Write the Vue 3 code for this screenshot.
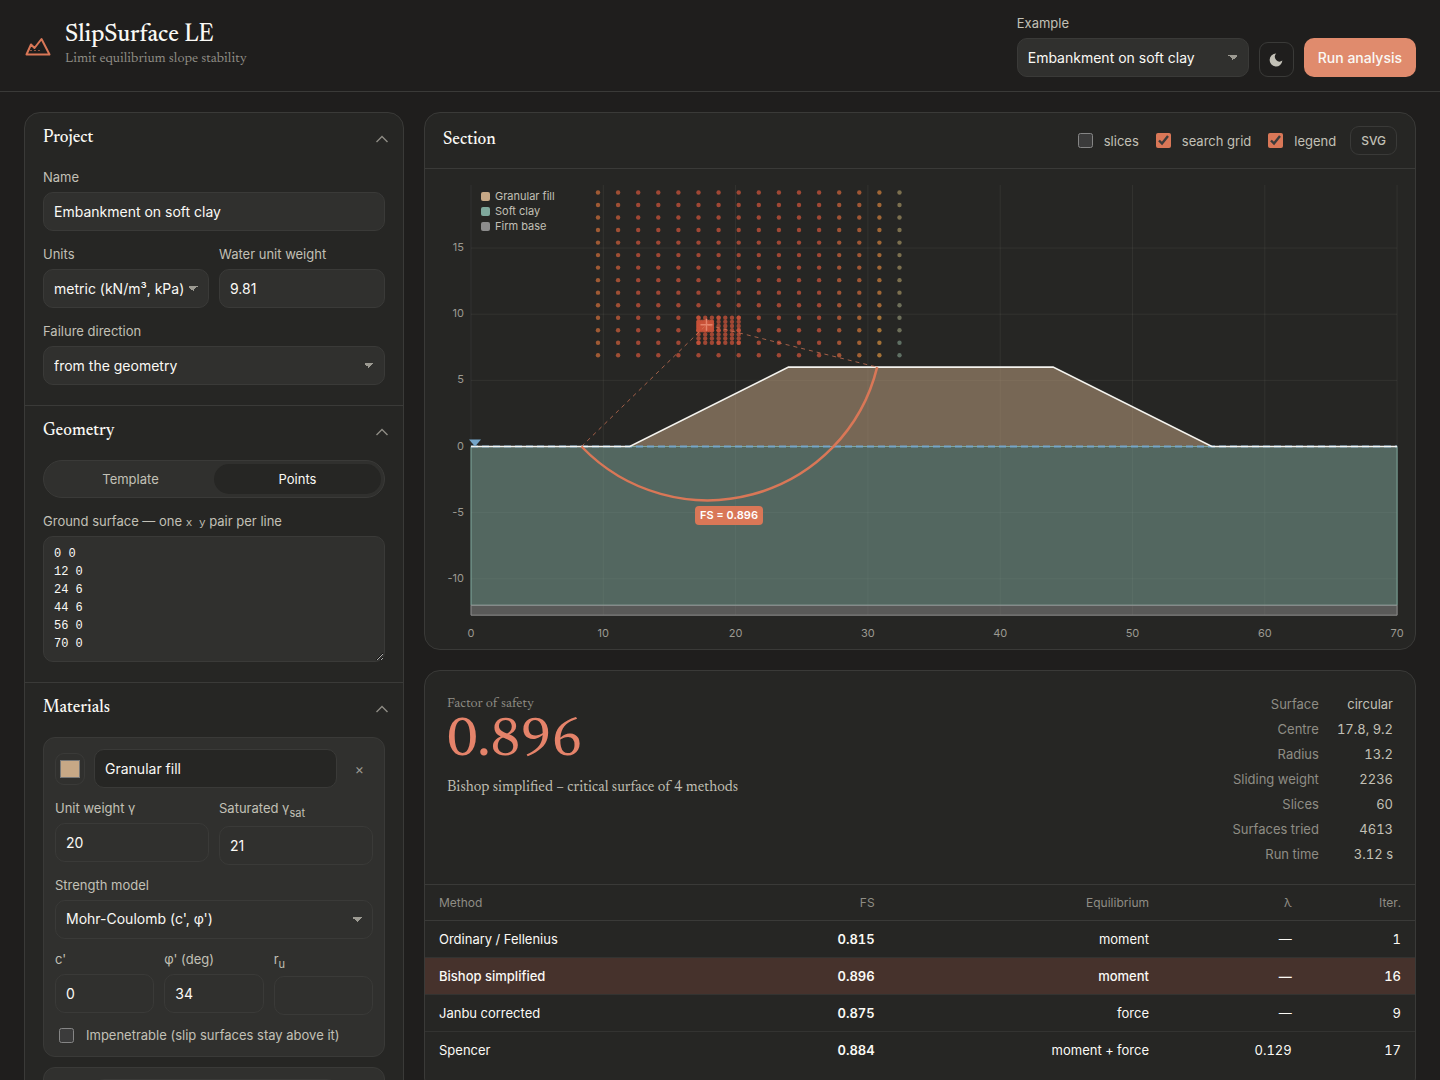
<script setup>
import { computed, ref } from 'vue';

const project = ref({ name: 'Embankment on soft clay', units: 'metric', water: '9.81', direction: 'auto' });
const example = ref('embankment');
const geometryTab = ref('points');
const surface = ref('0 0\n12 0\n24 6\n44 6\n56 0\n70 0');
const show = ref({ slices: false, grid: true, legend: true });
const materials = ref([
  { name: 'Granular fill', color: '#c7a886', gamma: '20', sat: '21', c: '0', phi: '34', ru: '', hard: false },
  { name: 'Soft clay', color: '#7fa89c', gamma: '17', sat: '17', c: '20', phi: '0', ru: '', hard: false },
]);
const legend = [
  { name: 'Granular fill', color: '#c7a886' },
  { name: 'Soft clay', color: '#7fa89c' },
  { name: 'Firm base', color: '#8c8c8c' },
];
const facts = [
  ['Surface', 'circular'],
  ['Centre', '17.8, 9.2'],
  ['Radius', '13.2'],
  ['Sliding weight', '2236'],
  ['Slices', '60'],
  ['Surfaces tried', '4613'],
  ['Run time', '3.12 s'],
];
const methods = [
  { name: 'Ordinary / Fellenius', fs: '0.815', eq: 'moment', lambda: '—', iter: 1 },
  { name: 'Bishop simplified', fs: '0.896', eq: 'moment', lambda: '—', iter: 16, active: true },
  { name: 'Janbu corrected', fs: '0.875', eq: 'force', lambda: '—', iter: 9 },
  { name: 'Spencer', fs: '0.884', eq: 'moment + force', lambda: '0.129', iter: 17 },
];

// Section drawing: world metres to viewBox units.
const K = 13.23;
const X = (x) => 46 + x * K;
const Y = (y) => 277.5 - y * K;
const pts = (list) => list.map(([x, y]) => `${X(x)},${Y(y)}`).join(' ');
const ground = [[0, 0], [12, 0], [24, 6], [44, 6], [56, 0], [70, 0]];
const xTicks = [0, 10, 20, 30, 40, 50, 60, 70];
const yTicks = [15, 10, 5, 0, -5, -10];

// Search grid coloured by factor of safety, coarse pass then two refinements.
const dots = computed(() => {
  const out = [];
  for (let i = 0; i < 16; i++) {
    for (let j = 0; j < 14; j++) {
      let fill = '#c9533a';
      if (i === 15) fill = j > 11 ? '#73897a' : j > 8 ? '#86886c' : '#9a8a5e';
      else if (i === 14) fill = j > 9 ? '#cf8b3d' : '#cb7c3b';
      else if (i === 13) fill = j > 9 ? '#cc7438' : '#c9673a';
      else if (i === 12) fill = '#ca623a';
      else if (i === 0) fill = '#c96c3a';
      else if (i === 1) fill = '#c95d3a';
      out.push({ x: 173 + i * 20.1, y: 23.5 + j * 12.52, fill });
    }
  }
  for (let i = 0; i < 7; i++) {
    for (let j = 0; j < 7; j++) out.push({ x: 273.5 + i * 6.7, y: 148.7 + j * 4.17, fill: '#c9533a' });
  }
  for (let i = 0; i < 7; i++) {
    for (let j = 0; j < 7; j++) out.push({ x: 273.5 + i * 2.24, y: 152.8 + j * 1.4, fill: '#c9533a' });
  }
  return out;
});
</script>

<template>
  <div class="app">
    <header class="topbar">
      <svg class="logo" viewBox="0 0 28 28" width="28" height="28" aria-hidden="true">
        <path d="M2.5 23.500 7 13.500l3.500 3.500L17.500 8l8 15.500z" fill="none" stroke="#d97757" stroke-width="2" stroke-linejoin="round" />
        <path d="M6 19.500h12" fill="none" stroke="#d97757" stroke-width="1" stroke-dasharray="2 2" opacity="0.6" />
      </svg>
      <div class="brand">
        <h1>SlipSurface LE</h1>
        <p>Limit equilibrium slope stability</p>
      </div>
      <div class="actions">
        <div class="field example">
          <label for="example">Example</label>
          <select id="example" v-model="example">
            <option value="embankment">Embankment on soft clay</option>
          </select>
        </div>
        <button class="icon-btn" type="button" aria-label="Toggle theme">
          <svg viewBox="0 0 16 16" width="16" height="16"><path d="M8.200 1.600A6.400 6.400 0 1 0 14.400 8.600 4.700 4.700 0 0 1 8.200 1.600z" fill="#c2c0b6" /></svg>
        </button>
        <button class="primary" type="button">Run analysis</button>
      </div>
    </header>

    <div class="layout">
      <aside class="card sidebar">
        <section>
          <h2>Project<svg class="chev" viewBox="0 0 14 8" width="14" height="8"><path d="M1.500 7 7 1.500 12.500 7" /></svg></h2>
          <div class="field">
            <label for="name">Name</label>
            <input id="name" v-model="project.name" type="text">
          </div>
          <div class="row">
            <div class="field">
              <label for="units">Units</label>
              <select id="units" v-model="project.units">
                <option value="metric">metric (kN/m³, kPa)</option>
              </select>
            </div>
            <div class="field">
              <label for="water">Water unit weight</label>
              <input id="water" v-model="project.water" type="text">
            </div>
          </div>
          <div class="field">
            <label for="direction">Failure direction</label>
            <select id="direction" v-model="project.direction">
              <option value="auto">from the geometry</option>
            </select>
          </div>
        </section>

        <section>
          <h2>Geometry<svg class="chev" viewBox="0 0 14 8" width="14" height="8"><path d="M1.500 7 7 1.500 12.500 7" /></svg></h2>
          <div class="tabs">
            <button type="button" :class="{ on: geometryTab === 'template' }" @click="geometryTab = 'template'">Template</button>
            <button type="button" :class="{ on: geometryTab === 'points' }" @click="geometryTab = 'points'">Points</button>
          </div>
          <div class="field">
            <label for="ground">Ground surface — one <code>x y</code> pair per line</label>
            <textarea id="ground" v-model="surface" spellcheck="false" />
          </div>
        </section>

        <section>
          <h2>Materials<svg class="chev" viewBox="0 0 14 8" width="14" height="8"><path d="M1.500 7 7 1.500 12.500 7" /></svg></h2>
          <div class="materials">
            <div v-for="(m, i) in materials" :key="i" class="material">
              <div class="material-head">
                <input v-model="m.color" type="color" aria-label="Colour">
                <input v-model="m.name" type="text" aria-label="Material name">
                <button type="button" aria-label="Remove material">×</button>
              </div>
              <div class="row">
                <div class="field">
                  <label :for="`g${i}`">Unit weight γ</label>
                  <input :id="`g${i}`" v-model="m.gamma" type="text">
                </div>
                <div class="field">
                  <label :for="`s${i}`">Saturated γ<sub>sat</sub></label>
                  <input :id="`s${i}`" v-model="m.sat" type="text">
                </div>
              </div>
              <div class="field">
                <label :for="`model${i}`">Strength model</label>
                <select :id="`model${i}`"><option>Mohr-Coulomb (c', φ')</option></select>
              </div>
              <div class="row">
                <div class="field">
                  <label :for="`c${i}`">c'</label>
                  <input :id="`c${i}`" v-model="m.c" type="text">
                </div>
                <div class="field">
                  <label :for="`p${i}`">φ' (deg)</label>
                  <input :id="`p${i}`" v-model="m.phi" type="text">
                </div>
                <div class="field">
                  <label :for="`r${i}`">r<sub>u</sub></label>
                  <input :id="`r${i}`" v-model="m.ru" type="text">
                </div>
              </div>
              <label class="check"><input v-model="m.hard" type="checkbox"><span>Impenetrable (slip surfaces stay above it)</span></label>
            </div>
          </div>
        </section>
      </aside>

      <main>
        <section class="card">
          <div class="section-head">
            <h2>Section</h2>
            <label class="check"><input v-model="show.slices" type="checkbox"><span>slices</span></label>
            <label class="check"><input v-model="show.grid" type="checkbox"><span>search grid</span></label>
            <label class="check"><input v-model="show.legend" type="checkbox"><span>legend</span></label>
            <button class="small-btn" type="button">SVG</button>
          </div>
          <svg class="plot" viewBox="0 0 990 480">
            <g class="grid">
              <line v-for="x in xTicks" :key="`x${x}`" :x1="X(x)" :x2="X(x)" y1="16" y2="446" />
              <line v-for="y in yTicks" :key="`y${y}`" :x1="X(0)" :x2="X(70)" :y1="Y(y)" :y2="Y(y)" />
            </g>
            <polygon :points="pts([[12, 0], [24, 6], [44, 6], [56, 0]])" fill="#c7a886" fill-opacity="0.5" />
            <polygon :points="pts([[0, 0], [70, 0], [70, -12], [0, -12]])" fill="#7fa89c" fill-opacity="0.5" stroke="#7fa89c" />
            <polygon :points="pts([[0, -12], [70, -12], [70, -12.75], [0, -12.75]])" fill="#8c8c8c" fill-opacity="0.5" stroke="#8c8c8c" />
            <line :x1="X(0)" :x2="X(70)" :y1="Y(0)" :y2="Y(0)" stroke="#74a5c9" stroke-width="2" stroke-dasharray="7 4" />
            <polyline :points="pts(ground)" fill="none" stroke="#f5f4ef" stroke-width="1.600" />
            <path :d="`M${X(0) - 2} ${Y(0) - 7}h12l-6 7z`" fill="#74a5c9" />
            <g v-if="show.grid" fill-opacity="0.75">
              <circle v-for="(d, i) in dots" :key="i" :cx="d.x" :cy="d.y" r="2.200" :fill="d.fill" />
            </g>
            <g fill="none" stroke="#d97757">
              <path :d="`M${X(8.35)} ${Y(0)}L${X(17.8)} ${Y(9.2)}L${X(30.7)} ${Y(6)}`" stroke-dasharray="4 4" opacity="0.7" />
              <path :d="`M${X(8.35)} ${Y(0)}A${13.2 * K} ${13.2 * K} 0 0 0 ${X(30.7)} ${Y(6)}`" stroke-width="2.500" />
              <path :d="`M${X(17.8) - 6} ${Y(9.2)}h12m-6 -6v12`" stroke="#e5836a" stroke-width="1.500" />
            </g>
            <rect x="270" y="337" width="68" height="19" rx="4" fill="#d97757" />
            <text class="fs-tag" x="304" y="350" text-anchor="middle">FS = 0.896</text>
            <g v-if="show.legend" class="legend">
              <g v-for="(l, i) in legend" :key="l.name">
                <rect x="56" :y="23 + i * 15" width="9" height="9" rx="2" :fill="l.color" />
                <text x="70" :y="31 + i * 15">{{ l.name }}</text>
              </g>
            </g>
            <g class="ticks">
              <text v-for="x in xTicks" :key="x" :x="X(x)" y="468" text-anchor="middle">{{ x }}</text>
              <text v-for="y in yTicks" :key="y" x="39" :y="Y(y) + 3" text-anchor="end">{{ y }}</text>
            </g>
          </svg>
        </section>

        <section class="card results">
          <div class="summary">
            <div class="result">
              <p class="kicker">Factor of safety</p>
              <p class="fs">0.896</p>
              <p class="note">Bishop simplified – critical surface of 4 methods</p>
            </div>
            <dl>
              <template v-for="[k, v] in facts" :key="k">
                <dt>{{ k }}</dt>
                <dd>{{ v }}</dd>
              </template>
            </dl>
          </div>
          <table>
            <thead>
              <tr><th>Method</th><th>FS</th><th>Equilibrium</th><th>λ</th><th>Iter.</th></tr>
            </thead>
            <tbody>
              <tr v-for="m in methods" :key="m.name" :class="{ active: m.active }">
                <td>{{ m.name }}</td>
                <td>{{ m.fs }}</td>
                <td>{{ m.eq }}</td>
                <td>{{ m.lambda }}</td>
                <td>{{ m.iter }}</td>
              </tr>
            </tbody>
          </table>
        </section>
      </main>
    </div>
  </div>
</template>

<style>
html { background: #1f1e1d; color-scheme: dark; }
body { margin: 0; }
</style>

<style scoped>
.app {
  --line: #3a3a38;
  --muted: #8f8d85;
  --soft: #c2c0b6;
  --text: #faf9f5;
  --serif: Newsreader, "Liberation Serif", serif;
  color: var(--text);
  font: 13px/20px Inter, sans-serif;
  accent-color: #d97757;
}
.app *, .app *::before { box-sizing: border-box; }
h1, h2, p, dl, dd { margin: 0; }
h1, h2, .brand p, .result { font-family: var(--serif); }
button { font: inherit; cursor: pointer; }

.topbar {
  display: flex;
  align-items: center;
  gap: 13px;
  padding: 13px 24px 14px;
  border-bottom: 1px solid var(--line);
}
.brand { flex: 1; }
h1 { font-size: 24px; line-height: 28px; font-weight: 500; }
.brand p { font-size: 14px; line-height: 20px; color: var(--muted); }
.actions { display: flex; align-items: flex-end; gap: 10px; }
.example { width: 232px; }
.icon-btn {
  display: grid;
  place-items: center;
  width: 35px;
  height: 35px;
  padding: 0;
  border: 1px solid var(--line);
  border-radius: 9px;
  background: none;
}
.primary {
  height: 39px;
  padding: 0 14px;
  border: 0;
  border-radius: 10px;
  background: #e08b6d;
  color: var(--text);
  font-size: 14px;
  font-weight: 500;
}

.layout {
  display: grid;
  grid-template-columns: 380px minmax(0, 1fr);
  align-items: start;
  gap: 20px;
  padding: 20px 24px;
}
.card { border: 1px solid var(--line); border-radius: 16px; background: #262624; overflow: hidden; }
main { display: grid; gap: 20px; }

.sidebar section { display: grid; gap: 13px; padding: 14px 18px 20px; }
.sidebar section + section { border-top: 1px solid var(--line); }
h2 { font-size: 17px; line-height: 24px; font-weight: 500; }
.sidebar h2 { display: flex; justify-content: space-between; align-items: center; margin-bottom: 3px; }
.chev { margin-right: -4px; fill: none; stroke: var(--muted); stroke-width: 1.4; }

.field { display: grid; gap: 5px; align-content: start; min-width: 0; }
.field label { color: var(--soft); line-height: 20px; }
.row { display: flex; gap: 10px; }
.row .field { flex: 1; }
sub { font-size: 11px; line-height: 16px; }
code { font-family: "Liberation Mono", monospace; font-size: 11px; line-height: 16px; }
input[type="text"], select, textarea {
  width: 100%;
  min-width: 0;
  height: 39px;
  padding: 0 10px;
  border: 1px solid var(--line);
  border-radius: 10px;
  background: #30302e;
  color: var(--text);
  font: 14px/20px Inter, sans-serif;
}
select {
  appearance: none;
  background-image: linear-gradient(45deg, transparent 50%, #9c9a92 50%), linear-gradient(-45deg, transparent 50%, #9c9a92 50%);
  background-position: right 15px center, right 10px center;
  background-size: 5px 5px;
  background-repeat: no-repeat;
}
textarea {
  display: block;
  height: 126px;
  padding: 8px 10px;
  resize: vertical;
  font: 12px/18px "Liberation Mono", monospace;
}
.tabs {
  display: flex;
  height: 38px;
  padding: 3px;
  border: 1px solid var(--line);
  border-radius: 19px;
  background: #30302e;
}
.tabs button { flex: 1; border: 0; border-radius: 16px; background: none; color: var(--soft); }
.tabs .on { background: #262624; color: var(--text); }

.materials { display: grid; gap: 10px; }
.material {
  display: grid;
  gap: 10px;
  padding: 11px;
  border: 1px solid var(--line);
  border-radius: 12px;
  background: #30302e;
}
.material-head { display: flex; align-items: center; gap: 9px; }
.material-head input[type="text"] { flex: 1; background: #262624; }
.material-head input[type="color"] {
  width: 30px;
  height: 32px;
  padding: 2px;
  border: 1px solid var(--line);
  border-radius: 9px;
  background: none;
}
.material-head button { width: 27px; padding: 0; border: 0; background: none; color: #9c9a92; font-size: 14px; }

.check { display: flex; align-items: center; gap: 12px; color: var(--soft); }
.check input { width: 15px; height: 15px; margin: 0; }
.material .check { padding-left: 4px; }

.section-head {
  display: flex;
  align-items: center;
  gap: 17px;
  height: 56px;
  padding: 0 18px;
  border-bottom: 1px solid var(--line);
}
.section-head h2 { flex: 1; }
.section-head .check { gap: 11px; }
.small-btn {
  height: 29px;
  margin-left: -3px;
  padding: 0 10px;
  border: 1px solid var(--line);
  border-radius: 9px;
  background: none;
  color: var(--soft);
  font-size: 12px;
  font-weight: 500;
}
.plot { display: block; width: 100%; font-family: Inter, sans-serif; font-size: 11px; }
.grid { stroke: #faf9f5; stroke-opacity: 0.06; }
.ticks { fill: #9c9a92; }
.legend { fill: var(--soft); }
.fs-tag { fill: #fff; font-weight: 600; font-variant-numeric: tabular-nums; }

.results { padding-bottom: 24px; }
.summary { display: flex; justify-content: space-between; padding: 23px 22px 20px; }
.kicker { color: var(--muted); font-size: 14px; line-height: 20px; }
.fs { color: #e5836a; font-size: 54px; line-height: 56px; font-weight: 500; }
.note { margin-top: 8px; color: var(--soft); font-size: 15px; line-height: 20px; }
dl {
  display: grid;
  grid-template-columns: auto auto;
  gap: 5px 18px;
  text-align: right;
  font-variant-numeric: tabular-nums;
}
dt { color: var(--muted); }
dd { color: var(--soft); }

table { width: 100%; border-collapse: collapse; font-variant-numeric: tabular-nums; }
th, td { height: 37px; padding: 0 14px; text-align: right; font-weight: 400; border-top: 1px solid var(--line); }
th { height: 36px; color: var(--muted); font-size: 12px; }
tbody tr + tr td { border-top-color: #333331; }
th:first-child, td:first-child { text-align: left; }
.active { background: #46322c; }
.active td { font-weight: 500; }
td:nth-child(2), .active td:nth-child(2) { font-weight: 600; }
</style>
